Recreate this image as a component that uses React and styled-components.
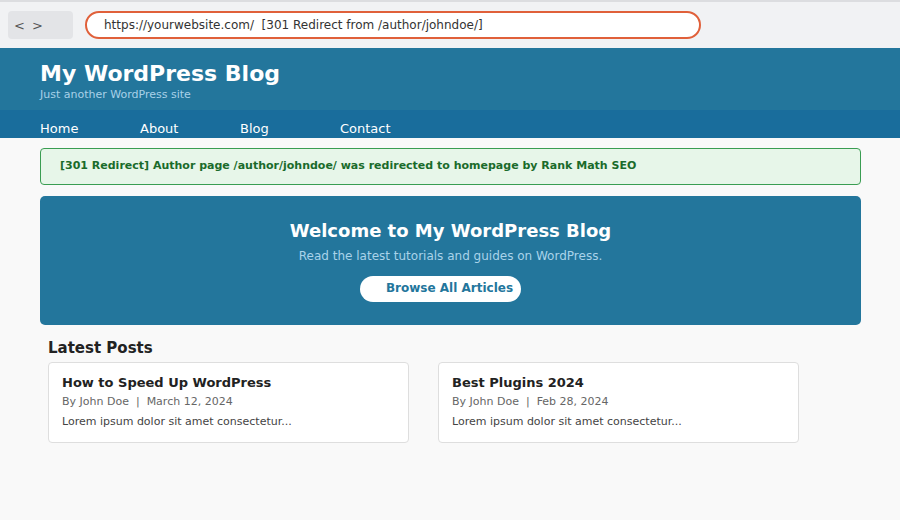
import React from 'react'
import styled, { createGlobalStyle } from 'styled-components'

const GlobalStyle = createGlobalStyle`
  html, body {
    margin: 0;
    padding: 0;
    background: #f9f9f9;
    font-family: "DejaVu Sans", Verdana, sans-serif;
  }
`

const Page = styled.div`
  width: 900px;
  height: 520px;
  overflow: hidden;
  background: #f9f9f9;
`

const BrowserBar = styled.div`
  height: 46px;
  border-top: 2px solid #dcdde0;
  background: #f1f2f4;
  display: flex;
  align-items: center;
  padding: 0 8px;
  gap: 12px;
  box-sizing: content-box;
`

const NavButtons = styled.div`
  width: 65px;
  height: 28px;
  background: #e3e4e7;
  border-radius: 4px;
  display: flex;
  align-items: center;
  padding-left: 6px;
  box-sizing: border-box;
  gap: 7px;
  font-size: 13px;
  color: #555;
`

const UrlBar = styled.div`
  width: 616px;
  height: 28px;
  box-sizing: border-box;
  border: 2px solid #e0603a;
  border-radius: 14px;
  background: #fff;
  display: flex;
  align-items: center;
  padding-left: 17px;
  font-size: 12px;
  color: #333;
  white-space: pre;
`

const SiteHeader = styled.header`
  background: #23769c;
  height: 62px;
  padding: 13px 40px 0;
  box-sizing: border-box;
`

const SiteTitle = styled.h1`
  margin: 0;
  font-size: 22px;
  line-height: 26px;
  font-weight: bold;
  color: #fff;
`

const Tagline = styled.div`
  margin-top: 2px;
  font-size: 11px;
  line-height: 12px;
  color: #a8d1e8;
`

const Menu = styled.nav`
  background: #196d9c;
  height: 28px;
  display: flex;
  align-items: center;
  padding: 8px 40px 0;
  box-sizing: border-box;
`

const MenuItem = styled.a`
  width: 100px;
  font-size: 13px;
  color: #fff;
  text-decoration: none;
`

const Main = styled.main`
  padding: 10px 39px 0 40px;
`

const Notice = styled.div`
  height: 37px;
  box-sizing: border-box;
  border: 1px solid #3a9d52;
  border-radius: 4px;
  background: #e7f6e9;
  color: #1a6b2b;
  font-size: 11px;
  font-weight: bold;
  display: flex;
  align-items: center;
  padding: 0 0 2px 19px;
`

const Hero = styled.section`
  margin-top: 11px;
  height: 129px;
  box-sizing: border-box;
  background: #23769c;
  border-radius: 5px;
  display: flex;
  flex-direction: column;
  align-items: center;
  padding-top: 24px;
`

const HeroTitle = styled.h2`
  margin: 0;
  font-size: 18px;
  line-height: 22px;
  color: #fff;
  font-weight: bold;
`

const HeroText = styled.p`
  margin: 6px 0 0;
  font-size: 12px;
  line-height: 16px;
  color: #a9d3ea;
`

const HeroButton = styled.a`
  margin: 12px 20px 0 0;
  height: 26px;
  box-sizing: border-box;
  padding: 0 8px 2px 26px;
  background: #fff;
  border-radius: 13px;
  color: #23769c;
  font-size: 12px;
  font-weight: bold;
  display: flex;
  align-items: center;
`

const Posts = styled.section`
  padding: 14px 8px 0;
`

const PostsTitle = styled.h3`
  margin: 0 0 5px;
  font-size: 15px;
  line-height: 18px;
  color: #222;
  font-weight: bold;
`

const Grid = styled.div`
  display: grid;
  grid-template-columns: 361px 361px;
  gap: 29px;
`

const Card = styled.article`
  height: 81px;
  box-sizing: border-box;
  background: #fff;
  border: 1px solid #dedede;
  border-radius: 4px;
  padding: 11px 13px 0;
`

const CardTitle = styled.h4`
  margin: 0;
  font-size: 13px;
  line-height: 17px;
  color: #222;
  font-weight: bold;
`

const Meta = styled.div`
  margin-top: 4px;
  font-size: 11px;
  line-height: 14px;
  color: #666;
  white-space: pre;
`

const Excerpt = styled.p`
  margin: 6px 0 0;
  font-size: 11px;
  line-height: 14px;
  color: #444;
`

const posts = [
  { title: 'How to Speed Up WordPress', date: 'March 12, 2024' },
  { title: 'Best Plugins 2024', date: 'Feb 28, 2024' },
]

export default function App() {
  return (
    <Page>
      <GlobalStyle />
      <BrowserBar>
        <NavButtons>
          <span>&lt;</span>
          <span>&gt;</span>
        </NavButtons>
        <UrlBar>https://yourwebsite.com/  [301 Redirect from /author/johndoe/]</UrlBar>
      </BrowserBar>
      <SiteHeader>
        <SiteTitle>My WordPress Blog</SiteTitle>
        <Tagline>Just another WordPress site</Tagline>
      </SiteHeader>
      <Menu>
        <MenuItem>Home</MenuItem>
        <MenuItem>About</MenuItem>
        <MenuItem>Blog</MenuItem>
        <MenuItem>Contact</MenuItem>
      </Menu>
      <Main>
        <Notice>[301 Redirect] Author page /author/johndoe/ was redirected to homepage by Rank Math SEO</Notice>
        <Hero>
          <HeroTitle>Welcome to My WordPress Blog</HeroTitle>
          <HeroText>Read the latest tutorials and guides on WordPress.</HeroText>
          <HeroButton>Browse All Articles</HeroButton>
        </Hero>
        <Posts>
          <PostsTitle>Latest Posts</PostsTitle>
          <Grid>
            {posts.map((p) => (
              <Card key={p.title}>
                <CardTitle>{p.title}</CardTitle>
                <Meta>{`By John Doe  |  ${p.date}`}</Meta>
                <Excerpt>Lorem ipsum dolor sit amet consectetur...</Excerpt>
              </Card>
            ))}
          </Grid>
        </Posts>
      </Main>
    </Page>
  )
}
